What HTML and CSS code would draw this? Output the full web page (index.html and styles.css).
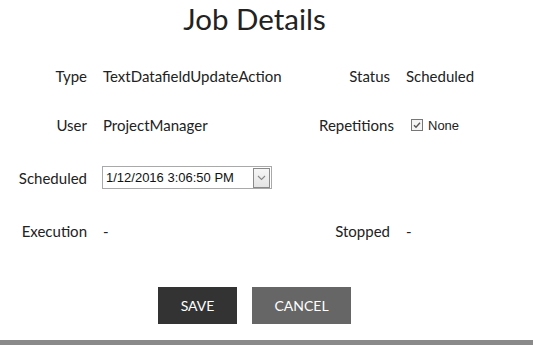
FILE: index.html
```html
<!DOCTYPE html>
<html>
<head>
<meta charset="utf-8">
<link rel="stylesheet" href="styles.css">
</head>
<body>
<div class="page">
  <h1 class="title">Job Details</h1>
  <div class="details">
    <div class="label">Type</div>
    <div class="value">TextDatafieldUpdateAction</div>
    <div class="label">Status</div>
    <div class="value">Scheduled</div>

    <div class="label">User</div>
    <div class="value">ProjectManager</div>
    <div class="label">Repetitions</div>
    <div class="value check">
      <span class="checkbox"><svg width="12" height="12" viewBox="0 0 12 12"><rect x="0.5" y="0.5" width="11" height="11" fill="#f4f4f4" stroke="#777"/><path d="M3 6.2 L5 8.2 L9 3.8" fill="none" stroke="#555" stroke-width="1.4"/></svg></span>
      <span class="check-text">None</span>
    </div>

    <div class="label">Scheduled</div>
    <div class="value">
      <div class="select">
        <span class="select-text">1/12/2016 3:06:50 PM</span>
        <span class="select-btn"><svg width="9" height="6" viewBox="0 0 9 6"><path d="M1 1 L4.5 4.5 L8 1" fill="none" stroke="#888" stroke-width="1.1"/></svg></span>
      </div>
    </div>
    <div class="label"></div>
    <div class="value"></div>

    <div class="label">Execution</div>
    <div class="value">-</div>
    <div class="label">Stopped</div>
    <div class="value">-</div>
  </div>
  <div class="actions">
    <button class="btn btn-save">SAVE</button>
    <button class="btn btn-cancel">CANCEL</button>
  </div>
</div>
<div class="bottom-bar"></div>
</body>
</html>
```
FILE: styles.css
```css
html, body {
  margin: 0;
  padding: 0;
  background: #fff;
}
body {
  width: 533px;
  height: 345px;
  overflow: hidden;
  position: relative;
  font-family: Lato, "Open Sans", sans-serif;
  color: #222;
}
.page {
  width: 509px;
}
.title {
  margin: 0;
  height: 52px;
  font-family: Lato, sans-serif;
  font-weight: 400;
  font-size: 29.5px;
  line-height: 38px;
  text-align: center;
  color: #222;
}
.details {
  display: grid;
  grid-template-columns: 87px 200px 71px auto;
  grid-template-rows: 48px 50px 55px 52px;
  column-gap: 16px;
  align-items: center;
  font-size: 15px;
}
.label {
  text-align: right;
  white-space: nowrap;
}
.value {
  white-space: nowrap;
}
.check {
  display: flex;
  align-items: center;
  gap: 5px;
  padding-left: 5px;
}
.checkbox {
  display: flex;
}
.check-text {
  font-family: "Liberation Sans", sans-serif;
  font-size: 13px;
}
.select {
  width: 170px;
  height: 23px;
  box-sizing: border-box;
  border: 1px solid #a9a9a9;
  display: flex;
  align-items: center;
  justify-content: space-between;
  padding: 0 1px 0 3px;
  margin-left: -1px;
}
.select-text {
  font-family: "Liberation Sans", sans-serif;
  font-size: 13px;
  color: #111;
}
.select-btn {
  width: 15px;
  height: 18px;
  border: 1px solid #8a8a8a;
  background: linear-gradient(#f6f6f6, #e4e4e4);
  display: flex;
  align-items: center;
  justify-content: center;
}
.actions {
  display: flex;
  justify-content: center;
  gap: 15px;
  margin-top: 30px;
}
.btn {
  border: none;
  height: 37px;
  color: #fff;
  font-family: Lato, sans-serif;
  font-size: 14px;
  padding: 0;
}
.btn-save {
  width: 79px;
  background: #333;
}
.btn-cancel {
  width: 99px;
  background: #666;
}
.bottom-bar {
  position: absolute;
  left: 0;
  right: 0;
  bottom: 0;
  height: 5px;
  background: #8a8a8a;
}
```
